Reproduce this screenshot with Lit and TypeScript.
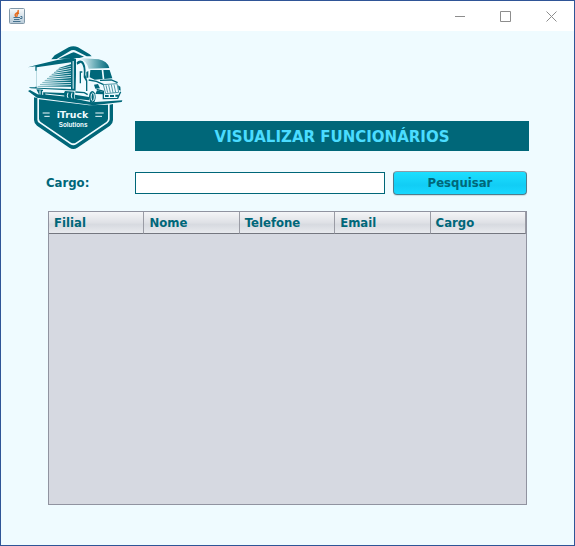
import { LitElement, html, css, svg } from "lit";
import { customElement, state } from "lit/decorators.js";

@customElement("truck-logo")
export class TruckLogo extends LitElement {
  static styles = css`
    :host { display: block; width: 104px; height: 114px; }
    .logo { display: block; width: 104px; height: 114px; }
    .name { font: 700 28px "DejaVu Sans", sans-serif; fill: #effbff; }
    .sub { font: 700 19px "Liberation Sans", sans-serif; fill: #effbff; }
  `;

  render() {
    const slats = Array.from({ length: 10 }, (_, i) => {
      const right = 72 + i * 7;
      const tip = 104 - i * 7;
      const low = right + 12 - i;
      return svg`<path fill="url(#slat)" d="M${tip} ${low} L142 ${right} V${right + 5} L${tip} ${low + 2}Z"/>`;
    });
    return html`
      <svg class="logo" viewBox="0 0 312 342" role="img" aria-label="iTruck Solutions">
        <defs>
          <linearGradient id="slat" gradientUnits="userSpaceOnUse" x1="36" x2="142" y1="0" y2="0">
            <stop offset="0" stop-color="#7fb8c1"/>
            <stop offset=".6" stop-color="#2f8695"/>
            <stop offset="1" stop-color="#006779"/>
          </linearGradient>
          <linearGradient id="roof" x1="0" x2="1">
            <stop offset="0" stop-color="#effbff"/>
            <stop offset=".5" stop-color="#6fb0ba"/>
            <stop offset="1" stop-color="#006779"/>
          </linearGradient>
        </defs>
        <path fill="#006779" d="M82 58 L92 46 L134 22 Q148 16 162 22 L197 43 L203 49 H188 L153 31 Q148 29 142 31 L98 57Z"/>
        <path fill="#006779" d="M104 56 L144 38 Q149 36 154 38 L180 50 L158 56Z"/>
        <path fill="#006779" d="M30 172 L40 174 V239 Q40 246 47 250 L139 313 Q148 319 157 313 L250 250 Q257 245 257 238 V194 L267 192 V240 Q267 250 258 257 L160 323 Q148 331 136 323 L39 257 Q30 250 30 240Z"/>
        <path fill="#006779" d="M45 178 L195 196 L252 194 V236 Q252 242 247 246 L155 308 Q148 312 141 308 L50 246 Q45 242 45 236Z"/>
        <path fill="#effbff" d="M35 80 L145 54 H172 V154 L35 146Z"/>
        <path fill="#006779" d="M12 82 L34 76 L100 60 L145 53 L156 56 V152 L20 145 L14 142 H34 L34 79Z M38 82 V143 L141 147 V67Z" fill-rule="evenodd"/>
        <path fill="#effbff" d="M30 92 H38 V140 H30Z M146 63 H149 V146 H146Z"/>
        ${slats}
        <path fill="#006779" d="M37 148 L57 149 V157 L120 159 L123 153 L151 155 L151 181 L68 168 L47 167Z"/>
        <path fill="none" stroke="#effbff" stroke-width="3" d="M48 151 V165 M56 153 V166 M64 162 L121 168 M132 158 Q127 168 133 177 M144 158 Q139 168 145 178"/>
        <path fill="#effbff" d="M157 67 Q160 54 173 56 L224 60 Q250 64 256 84 L268 112 L285 122 L292 153 L278 181 L210 185 L154 177Z"/>
        <path fill="url(#roof)" d="M178 55 L224 58 Q250 63 256 84 L194 86 Q188 62 168 58Z"/>
        <path fill="#006779" d="M158 67 Q166 58 176 64 Q187 74 184 104 L190 122 V153 H186 V124 L179 112 Q182 76 171 68 L159 74Z M167 94 H175 V98 H171 V130 H167Z M187 96 L193 93 L193 113 L187 113Z"/>
        <path fill="#006779" d="M199 90 L233 90 L236 117 L212 119 L197 112Z M238 90 L257 90 L265 115 L241 117Z"/>
        <path fill="none" stroke="#006779" stroke-width="4" d="M194 120 L217 124 L239 134 M228 121 L262 120 L281 128 M154 156 L181 158 L191 164 M218 148 L238 154 V176 L281 175 L290 155"/>
        <path fill="#006779" d="M210 134 L222 132 L228 145 L214 146Z M219 151 L240 157 L241 163 L214 162Z M282 136 L289 140 L290 152 L284 149Z"/>
        <path fill="#effbff" stroke="#006779" stroke-width="2" d="M238 134 L279 131 L284 157 L245 161Z"/>
        <path fill="none" stroke="#006779" stroke-width="2" d="M246 136 L251 158 M254 135 L259 158 M262 134 L267 158 M270 134 L275 157"/>
        <path stroke="#006779" stroke-width="6" d="M243 168 H254 M258 168 H270 M274 167 H284"/>
        <path fill="#006779" d="M153 164 L195 171 V181 L153 176Z"/>
        <ellipse cx="205" cy="171" rx="10" ry="18" fill="#006779"/>
        <ellipse cx="206" cy="171" rx="5" ry="12" fill="none" stroke="#effbff" stroke-width="3"/>
        <path fill="#006779" d="M18 150 L41 163 L153 176 L203 187 L295 181 L293 186 L208 196 L39 173 L12 153Z"/>
        <path stroke="#effbff" stroke-width="3" d="M56 219 H77 M61 229 H77 M214 219 H239 M214 229 H234"/>
        <text class="name" x="98" y="233">iTruck</text>
        <text class="sub" x="104" y="261">Solutions</text>
      </svg>
    `;
  }
}

@customElement("app-root")
export class AppRoot extends LitElement {
  static styles = css`
    :host {
      display: block;
      color: #006779;
      font: 700 13px/16px "DejaVu Sans Condensed", "DejaVu Sans", sans-serif;
    }
    * { box-sizing: border-box; }
    .window {
      display: flex;
      flex-direction: column;
      min-height: 100vh;
      border: 1px solid #2f5597;
      background: #effbff;
    }
    .titlebar {
      display: flex;
      align-items: center;
      height: 30px;
      padding-left: 8px;
      background: #fff;
    }
    .java { width: 16px; height: 16px; margin-right: auto; }
    .control {
      display: grid;
      place-items: center;
      width: 46px;
      height: 28px;
      padding: 0;
      border: 0;
      background: none;
    }
    .glyph { width: 11px; height: 11px; fill: none; stroke: #8d8d8d; }
    .page {
      display: flex;
      flex: 1;
      flex-direction: column;
      padding: 9px 47px 40px 23px;
    }
    .banner { display: flex; gap: 7px; margin-right: -2px; }
    .heading {
      flex: 1;
      align-self: flex-end;
      margin: 0 0 3px;
      padding-top: 2px;
      background: #006779;
      color: #4bdcff;
      font-family: "DejaVu Sans", sans-serif;
      font-size: 15px;
      line-height: 28px;
      text-align: center;
    }
    .search {
      display: grid;
      grid-template-columns: 81px 1fr 134px;
      align-items: center;
      column-gap: 8px;
      margin: 17px 0 16px 22px;
    }
    .field {
      width: 100%;
      height: 22px;
      padding: 0 4px;
      border: 1px solid #006779;
      background: #fff;
      color: inherit;
      font: inherit;
    }
    .submit {
      height: 24px;
      padding: 0;
      border: 1px solid #4f7d8d;
      border-top-color: #8c9ca8;
      border-radius: 4px;
      background: linear-gradient(#1cdfff, #12cdf5 60%, #17d8ff);
      box-shadow: 0 1px 1px #cfdde2;
      color: inherit;
      font: inherit;
    }
    .panel {
      flex: 1;
      margin-left: 24px;
      border: 1px solid #9093a0;
      background: #d6d9e1;
    }
    .grid { width: 100%; border-collapse: separate; border-spacing: 0; table-layout: fixed; }
    .column {
      height: 22px;
      padding: 0 5px;
      border-right: 1px solid #9a9ca5;
      border-bottom: 1px solid #74777f;
      background: linear-gradient(#f4f5f7, #dfe1e6 50%, #d7dae0 60%, #e8eaee);
      text-align: left;
    }
  `;

  @state() private cargo = "";

  private columns = ["Filial", "Nome", "Telefone", "Email", "Cargo"];

  render() {
    return html`
      <div class="window">
        <header class="titlebar">
          <svg class="java" viewBox="0 0 16 16" aria-hidden="true">
            <defs>
              <linearGradient id="tile" x2="0" y2="1">
                <stop stop-color="#f8fafb"/><stop offset="1" stop-color="#b7cbd9"/>
              </linearGradient>
            </defs>
            <rect x=".5" y=".5" width="15" height="15" rx="1" fill="url(#tile)" stroke="#8298a8"/>
            <path d="M9 2 Q10 4 7 5.500 Q5 7 7.500 9 M10 5 Q7 6 8.500 8.500" fill="none" stroke="#e66b1d" stroke-width="1.400"/>
            <path d="M4.500 9.500 H11 M5 11.500 H10.500 M4 13.500 H11.500 M11.500 8.500 H13 V10.500 H11" fill="none" stroke="#46728f"/>
          </svg>
          <button class="control" aria-label="Minimizar"><svg class="glyph" viewBox="0 0 11 11"><path d="M1 5.500H11"/></svg></button>
          <button class="control" aria-label="Maximizar"><svg class="glyph" viewBox="0 0 11 11"><path d="M.5 .5H10.500V10.500H.5Z"/></svg></button>
          <button class="control" aria-label="Fechar"><svg class="glyph" viewBox="0 0 11 11"><path d="M.5 .5L10.500 10.500M10.500 .5L.5 10.500"/></svg></button>
        </header>
        <main class="page">
          <div class="banner">
            <truck-logo></truck-logo>
            <h1 class="heading">VISUALIZAR FUNCIONÁRIOS</h1>
          </div>
          <form class="search" @submit=${(e: Event) => e.preventDefault()}>
            <label for="cargo">Cargo:</label>
            <input class="field" id="cargo" type="text" .value=${this.cargo}
              @input=${(e: Event) => (this.cargo = (e.target as HTMLInputElement).value)}>
            <button class="submit" type="submit">Pesquisar</button>
          </form>
          <div class="panel">
            <table class="grid">
              <thead>
                <tr>${this.columns.map((c) => html`<th class="column" scope="col">${c}</th>`)}</tr>
              </thead>
              <tbody></tbody>
            </table>
          </div>
        </main>
      </div>
    `;
  }
}
